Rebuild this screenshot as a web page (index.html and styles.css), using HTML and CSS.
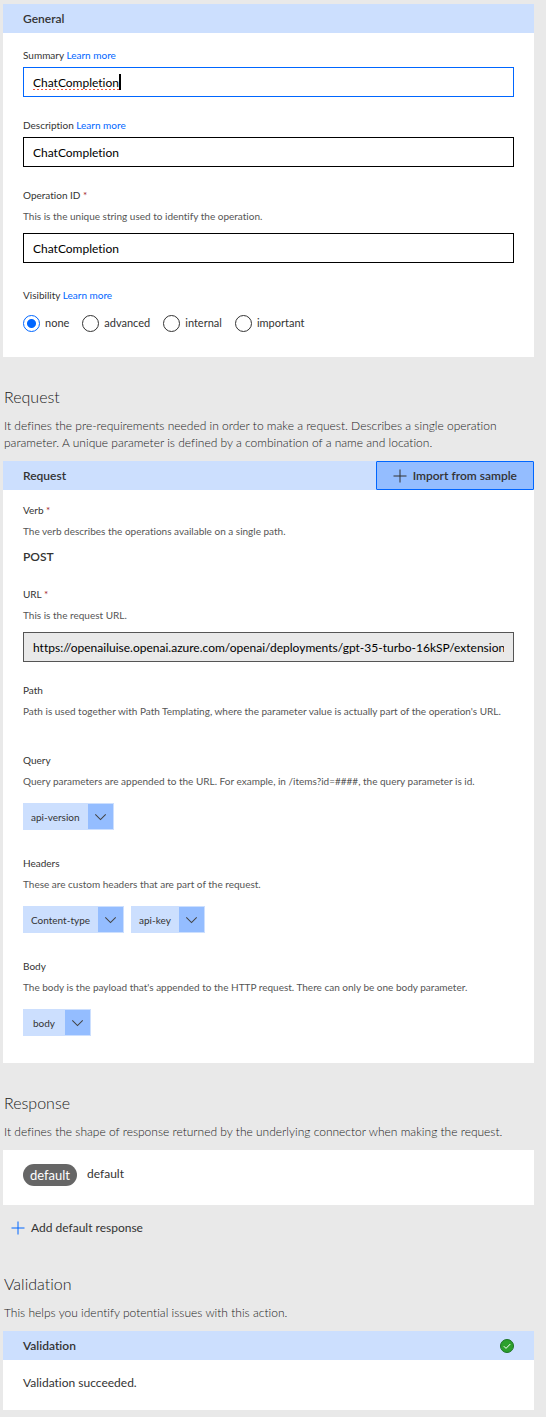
FILE: index.html
```html
<!DOCTYPE html>
<html lang="en">
<head>
  <meta charset="UTF-8" />
  <title>Connector action</title>
  <meta name="viewport" content="width=device-width, initial-scale=1.0" />
  <link rel="stylesheet" href="styles.css">
</head>
<body>

  <!-- General -->
  <section class="card">
    <div class="card-header"><h2>General</h2></div>
    <div class="card-body">
      <div class="field">
        <div class="label"><label for="summary">Summary</label> <a href="#">Learn more</a></div>
        <div class="input-wrap">
          <input type="text" id="summary" class="text-input active" value="ChatCompletion" />
          <span class="spell-mark"></span>
        </div>
      </div>

      <div class="field">
        <div class="label"><label for="description">Description</label> <a href="#">Learn more</a></div>
        <input type="text" id="description" class="text-input" value="ChatCompletion" />
      </div>

      <div class="field">
        <div class="label"><label for="operationId">Operation ID <span class="required">*</span></label></div>
        <p class="help">This is the unique string used to identify the operation.</p>
        <input type="text" id="operationId" class="text-input" value="ChatCompletion" />
      </div>

      <div class="field visibility" role="radiogroup" aria-labelledby="visibilityLabel">
        <div class="label"><span id="visibilityLabel">Visibility</span> <a href="#">Learn more</a></div>
        <div class="radios">
          <label><input type="radio" name="visibility" checked />none</label>
          <label><input type="radio" name="visibility" />advanced</label>
          <label><input type="radio" name="visibility" />internal</label>
          <label><input type="radio" name="visibility" />important</label>
        </div>
      </div>
    </div>
  </section>

  <!-- Request -->
  <h1>Request</h1>
  <p class="intro">It defines the pre-requirements needed in order to make a request. Describes a single operation parameter. A unique parameter is defined by a combination of a name and location.</p>

  <section class="card">
    <div class="card-header">
      <h2>Request</h2>
      <button class="btn-import">
        <svg class="plus" viewBox="0 0 14 14"><path d="M7 0.5v13M0.5 7h13" /></svg>
        Import from sample
      </button>
    </div>
    <div class="card-body request-body">
      <div class="field">
        <div class="label">Verb <span class="required">*</span></div>
        <p class="help">The verb describes the operations available on a single path.</p>
        <p class="verb">POST</p>
      </div>

      <div class="field">
        <div class="label"><label for="url">URL <span class="required">*</span></label></div>
        <p class="help">This is the request URL.</p>
        <input type="text" id="url" class="text-input readonly" readonly value="https://openailuise.openai.azure.com/openai/deployments/gpt-35-turbo-16kSP/extensions/chat/completions" />
      </div>

      <div class="field params">
        <div class="label">Path</div>
        <p class="help">Path is used together with Path Templating, where the parameter value is actually part of the operation's URL.</p>
      </div>

      <div class="field params">
        <div class="label">Query</div>
        <p class="help">Query parameters are appended to the URL. For example, in /items?id=####, the query parameter is id.</p>
        <div class="chips">
          <button class="chip"><span>api-version</span><svg viewBox="0 0 24 24"><path d="M7 10l5 5 5-5" /></svg></button>
        </div>
      </div>

      <div class="field params">
        <div class="label">Headers</div>
        <p class="help">These are custom headers that are part of the request.</p>
        <div class="chips">
          <button class="chip"><span>Content-type</span><svg viewBox="0 0 24 24"><path d="M7 10l5 5 5-5" /></svg></button>
          <button class="chip"><span>api-key</span><svg viewBox="0 0 24 24"><path d="M7 10l5 5 5-5" /></svg></button>
        </div>
      </div>

      <div class="field params">
        <div class="label">Body</div>
        <p class="help">The body is the payload that's appended to the HTTP request. There can only be one body parameter.</p>
        <div class="chips">
          <button class="chip"><span>body</span><svg viewBox="0 0 24 24"><path d="M7 10l5 5 5-5" /></svg></button>
        </div>
      </div>
    </div>
  </section>

  <!-- Response -->
  <h1>Response</h1>
  <p class="intro">It defines the shape of response returned by the underlying connector when making the request.</p>

  <section class="card response">
    <span class="pill">default</span>
    <span>default</span>
  </section>

  <button class="btn-add">
    <svg class="plus" viewBox="0 0 14 14"><path d="M7 0.5v13M0.5 7h13" /></svg>
    Add default response
  </button>

  <!-- Validation -->
  <h1>Validation</h1>
  <p class="intro">This helps you identify potential issues with this action.</p>

  <section class="card">
    <div class="card-header">
      <h2>Validation</h2>
      <svg class="success" viewBox="0 0 14 14"><circle cx="7" cy="7" r="6.5" /><path d="M3.8 7.2l2.2 2.2 4.3-4.4" /></svg>
    </div>
    <div class="card-body result">Validation succeeded.</div>
  </section>

</body>
</html>
```

FILE: styles.css
```css
* {
  box-sizing: border-box;
}

body {
  margin: 0;
  padding: 4px 12px 7px 3px;
  background: #e9e9e9;
  color: #333;
  font-family: Lato, "Open Sans", sans-serif;
  font-size: 12px;
  line-height: 18px;
  font-variant-ligatures: none;
}

h1, h2, p {
  margin: 0;
}

a {
  color: #0066ff;
  text-decoration: none;
}

input, button {
  font-family: inherit;
  font-size: inherit;
  font-variant-ligatures: inherit;
  color: inherit;
}

button {
  cursor: pointer;
}

h1 {
  margin-top: 28px;
  font-size: 16px;
  font-weight: 300;
  line-height: 24px;
}

.intro {
  margin: 8px 0 10px;
  font-weight: 300;
  line-height: 17px;
}

h1, .intro {
  padding-left: 1px;
  color: #222;
}

.card {
  background: #fff;
}

.card-header {
  display: flex;
  justify-content: space-between;
  align-items: center;
  height: 29px;
  padding-left: 20px;
  background: #ccdffe;
}

.card-header h2 {
  font-size: 12px;
  font-weight: 600;
}

.card-body {
  padding: 12px 20px 25px;
}

.request-body {
  padding-top: 10px;
  padding-bottom: 27px;
}

.field {
  margin-bottom: 18px;
}

.field:last-child {
  margin-bottom: 0;
}

.visibility {
  margin-top: 22px;
}

.label {
  padding-bottom: 2px;
  font-size: 10px;
  line-height: 20px;
}

.required {
  color: #a4262c;
}

.help {
  margin-bottom: 8px;
  color: #555;
  font-size: 10px;
  line-height: 18px;
  white-space: nowrap;
}

.text-input {
  display: block;
  width: 100%;
  height: 30px;
  padding: 0 9px;
  border: 1px solid #000;
  border-radius: 0;
  background: #fff;
  color: #000;
}

.text-input.active {
  border-color: #0066ff;
  outline: none;
}

.text-input.readonly {
  background: #e9e9e9;
  border-color: #555;
}

.input-wrap {
  position: relative;
}

/* spelling underline and text cursor */
.spell-mark {
  position: absolute;
  left: 10px;
  top: 7px;
  width: 88px;
  height: 16px;
  border-right: 2px solid #000;
  background: repeating-linear-gradient(to right, #f0503a 0 2px, transparent 2px 4px) bottom / 100% 1px no-repeat;
  pointer-events: none;
}

.radios {
  display: flex;
  gap: 13px;
  margin-top: 7px;
  font-size: 11px;
}

.radios label {
  display: flex;
  align-items: center;
  gap: 5px;
}

.radios input {
  appearance: none;
  width: 17px;
  height: 17px;
  margin: 0;
  border: 1px solid #333;
  border-radius: 50%;
}

.radios input:checked {
  border-color: #0066ff;
  background: radial-gradient(circle, #0066ff 4px, #fff 5px);
}

.plus {
  width: 14px;
  height: 14px;
  fill: none;
  stroke: #333;
}

.btn-import {
  display: flex;
  align-items: center;
  gap: 6px;
  height: 100%;
  padding: 0 16px;
  border: 1px solid #0066ff;
  border-radius: 1px;
  background: #94bdff;
  font-weight: 600;
}

.verb {
  font-weight: 600;
}

.params {
  min-height: 52px;
}

.chips {
  display: flex;
  gap: 7px;
  margin: 13px 0 23px;
}

.params:last-child .chips {
  margin-bottom: 0;
}

.chip {
  display: flex;
  align-items: center;
  height: 27px;
  padding: 0;
  border: 1px solid #ccdffe;
  background: #ccdffe;
  font-size: 10px;
}

.chip span {
  min-width: 41px;
  padding: 0 8px 0 7px;
}

.chip svg {
  width: 25px;
  height: 25px;
  background: #94bdff;
  fill: none;
  stroke: #444;
}

.response {
  display: flex;
  align-items: flex-start;
  gap: 10px;
  padding: 14px 20px 19px;
  line-height: 20px;
}

.pill {
  padding: 0 7px;
  border-radius: 11px;
  background: #666;
  color: #fff;
  font-size: 13px;
  line-height: 22px;
}

.btn-add {
  display: flex;
  align-items: center;
  gap: 6px;
  margin: 14px 0 35px;
  padding: 0 8px;
  border: none;
  background: none;
  line-height: 18px;
}

.btn-add .plus {
  stroke: #0066ff;
}

.success {
  width: 14px;
  height: 14px;
  margin-right: 20px;
  fill: #2ca02c;
  stroke: #1d7324;
}

.success path {
  fill: none;
  stroke: #fff;
}

.result {
  padding-top: 14px;
  padding-bottom: 18px;
}
```
